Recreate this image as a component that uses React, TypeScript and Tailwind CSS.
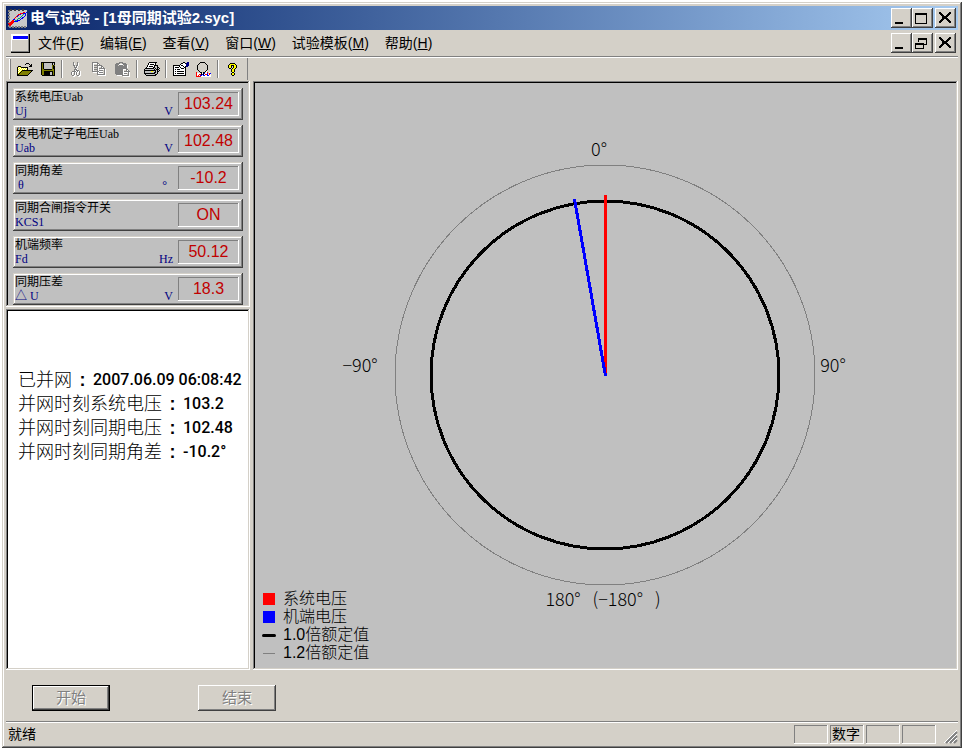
import { ReactNode } from "react"

const raised =
  "shadow-[inset_-1px_-1px_#404040,inset_1px_1px_#fff,inset_-2px_-2px_#808080,inset_2px_2px_#d4d0c8]"
const sunken =
  "shadow-[inset_-1px_-1px_#fff,inset_1px_1px_#808080,inset_-2px_-2px_#d4d0c8,inset_2px_2px_#000]"
const thinSunken = "shadow-[inset_-1px_-1px_#fff,inset_1px_1px_#808080]"
const card =
  "shadow-[inset_-1px_-1px_#404040,inset_1px_1px_#d4d0c8,inset_-2px_-2px_#808080,inset_2px_2px_#fff]"

const colors: Record<string, string> = {
  k: "#000000",
  w: "#ffffff",
  y: "#ffff00",
  o: "#808000",
  g: "#808080",
  s: "#c0c0c0",
  b: "#0000ff",
  n: "#000080",
  r: "#ff0000",
}

// each character is one pixel of the icon
function PixelIcon({ rows }: { rows: string[] }) {
  const width = Math.max(...rows.map((r) => r.length))
  return (
    <svg width={width} height={rows.length} shapeRendering="crispEdges" aria-hidden="true">
      {rows.map((row, y) =>
        [...row].map((c, x) =>
          colors[c] ? <rect key={x + "-" + y} x={x} y={y} width="1" height="1" fill={colors[c]} /> : null
        )
      )}
    </svg>
  )
}

const openIcon = [
  ".........kkk....",
  "........k...k.k.",
  ".............kk.",
  ".kkk........kkk.",
  "kywykkkkkkk.....",
  "kwywywywywk.....",
  "kywywywywyk.....",
  "kwywykkkkkkkkkkk",
  "kywykoooooooook.",
  "kwykoooooooook..",
  "kykoooooooook...",
  "kkoooooooook....",
  "kkkkkkkkkkk.....",
]

const saveIcon = [
  "kkkkkkkkkkkkkk",
  "kokssssssssksk",
  "kokssssssssk.k",
  "kokssssssssoko",
  "kokssssssssokk",
  "kokssssssssokk",
  "kokssssssssokk",
  "kookkkkkkkkook",
  "kooooooooooook",
  "kookkkkkkkkkok",
  "kookkkkkksskok",
  "kookkkkkksskok",
  "kookkkkkksskok",
  ".kkkkkkkkkkkkk",
]

const cutIcon = [
  "..g...g.....",
  "..gw..gw....",
  "..gw..gw....",
  "..gg.ggw....",
  "...gwgw.....",
  "...gggw.....",
  "....gw......",
  "...gggw.....",
  "...gwggg....",
  ".ggggwgwgw..",
  "gwwgwgwwgw..",
  "gw.gwgw.gw..",
  "gw.gwgw.gw..",
  ".ggww.ggww..",
  "..ww...ww...",
]

const copyIcon = [
  "gggggg..........",
  "gwwwwgg.........",
  "gw...gwg........",
  "gwgggggggg......",
  "gw...gwwwgg.....",
  "gwggggw..gwg....",
  "gw...gwgggggg...",
  "gwggggw.wwwwgw..",
  "gw...gwgggg.gw..",
  "gggggggwwww.gw..",
  ".wwwwgwgggg.gw..",
  ".....gwwwww.gw..",
  ".....ggggggggw..",
  "......wwwwwwww..",
]

const pasteIcon = [
  "....gggg........",
  ".gggg..gggg.....",
  "ggggwwwwgggg....",
  "ggg.gggg.gggw...",
  "ggggggggggggw...",
  "ggggggggggggw...",
  "gggggggggggg....",
  "ggggggggwwwgg...",
  "ggggggggw..gwg..",
  "ggggggggwgggggg.",
  "ggggggggwwwwwgw.",
  "ggggggggwggg.gw.",
  ".gggggggwwww.gw.",
  "..wwwwwgggggggw.",
  "........wwwwwww.",
]

const printIcon = [
  ".....kkkkkkkk...",
  "....kwwwwwwk....",
  "....kwkkkkwk....",
  "...kwwwwwwkkkk..",
  "...kwkkkkwk.sk..",
  "..kwwwwwwkksskk.",
  ".kkkkkkkkksksksk",
  "kssssssssskskkk.",
  "kkkkkkkkkkkksksk",
  "kssssssyysskskk.",
  "kssssssssskksk..",
  "kkkkkkkkkkkssk..",
  ".kssssssssskk...",
  "..kkkkkkkkkk....",
]

const propertiesIcon = [
  "..........kk..nn",
  "........kkwwknnn",
  ".......kwwwwwnnn",
  "kkkkkkkwkkwwwnnn",
  "kwwwwwkwwwkwknn.",
  "kwkkkkwkwwwkk...",
  "kwwwwwwwkkkwk...",
  "kwkwkkkwwwwwk...",
  "kwwwwwwwwwwwk...",
  "kwkwkkkkkkkwk...",
  "kwwwwwwwwwwwk...",
  "kwkwkkkkkkkwk...",
  "kwwwwwwwwwwwk...",
  "kkkkkkkkkkkkk...",
]

const zoomIcon = [
  "....kkkkk......",
  "...k.....k.....",
  "..k.......k....",
  ".k.........k...",
  ".k.........k...",
  ".k.........k...",
  ".k.........k...",
  ".k.........k...",
  "..k.......k....",
  "...k.....kw....",
  "r...kk.kk.wr.w.",
  "rwwwwkwkbwwb.rb",
  "rwwrrkbkwrrbwrw",
  "rwrwbbwbbwwbbww",
  "rrrrrwwwwwwwwww",
]

const helpIcon = [
  "..kkkkk...",
  ".kyyyyyk..",
  "kyykkkyyk.",
  "kyyk.kyyk.",
  "kyyk.kyyk.",
  ".kk.kyyk..",
  "...kyyk...",
  "...kyyk...",
  "...kyyk...",
  "....kk....",
  "...kyyk...",
  "...kyyk...",
  "....kk....",
]

function AppIcon() {
  return (
    <svg width="20" height="20" viewBox="0 0 20 20" shapeRendering="crispEdges" aria-hidden="true">
      <rect x="1" y="2" width="18" height="17" fill="#c8c8c8" />
      <path d="M1 19h18M1 2v17" stroke="#808080" strokeWidth="2" strokeDasharray="2 1" />
      <path d="M2 2h2M6 2h2M10 2h2M14 2h2" stroke="#404040" strokeWidth="2" />
      <path d="M5 13 8 9 13 6 18 5 17 8 12 12 7 14Z" stroke="#0000ff" strokeWidth="1" fill="none" />
      <path d="M6 11 10 7 17 4" stroke="#ff0000" strokeWidth="1" fill="none" />
      <path d="M7 13 12 10 16 6" stroke="#00a080" strokeWidth="1" fill="none" />
      <path d="M1 17 6 13" stroke="#ff0000" strokeWidth="3" fill="none" />
    </svg>
  )
}

function DocIcon() {
  return (
    <svg width="19" height="19" viewBox="0 0 19 19" shapeRendering="crispEdges" aria-hidden="true">
      <rect width="19" height="19" fill="#000" />
      <rect width="18" height="18" fill="#808080" />
      <rect width="17" height="17" fill="#fff" />
      <rect x="1" y="6" width="16" height="11" fill="#d4d0c8" />
      <rect x="2" y="2" width="15" height="3" fill="#0000ff" />
    </svg>
  )
}

function WindowButton({ label, d, thin }: { label: string; d: string; thin?: string }) {
  return (
    <button aria-label={label} className={"h-5 w-[21px] bg-[#d4d0c8] " + raised}>
      <svg width="21" height="20" shapeRendering="crispEdges" fill="none" stroke="#000" aria-hidden="true">
        <path d={d} strokeWidth="2" />
        {thin && <path d={thin} />}
      </svg>
    </button>
  )
}

function WindowButtons({ restore }: { restore?: boolean }) {
  return (
    <div className="ml-auto flex">
      <WindowButton label="最小化" d="M4 15h8" />
      {restore ? (
        <WindowButton
          label="还原"
          d="M6 6h9M3 11h9"
          thin="M6.500 5v4M14.500 5v7M12 11.500h3M3.500 10v6M11.500 10v6M3 15.500h9"
        />
      ) : (
        <WindowButton label="最大化" d="M3 6h12" thin="M3.500 5v11M14.500 5v11M3 15.500h12" />
      )}
      <div className="ml-[2px] flex">
        <WindowButton
          label="关闭"
          d="M4 5h2M5 6h2M6 7h2M7 8h2M8 9h3M7 10h5M7 11h2M11 11h2M6 12h2M12 12h2M5 13h2M13 13h2M4 14h2M14 14h2M10 9h2M11 8h2M12 7h2M13 6h2M14 5h2"
        />
      </div>
    </div>
  )
}

const menus = [
  ["文件", "F"],
  ["编辑", "E"],
  ["查看", "V"],
  ["窗口", "W"],
  ["试验模板", "M"],
  ["帮助", "H"],
]

const readings = [
  { name: "系统电压", suffix: "Uab", code: "Uj", unit: "V", value: "103.24" },
  { name: "发电机定子电压", suffix: "Uab", code: "Uab", unit: "V", value: "102.48" },
  { name: "同期角差", suffix: "", code: "\u00a0θ", unit: "°\u00a0\u00a0", value: "-10.2" },
  { name: "同期合闸指令开关", suffix: "", code: "KCS1", unit: "", value: "ON" },
  { name: "机端频率", suffix: "", code: "Fd", unit: "Hz", value: "50.12" },
  { name: "同期压差", suffix: "", code: "△\u00a0U", unit: "V", value: "18.3" },
]

const results = [
  ["已并网", "2007.06.09 06:08:42"],
  ["并网时刻系统电压", "103.2"],
  ["并网时刻同期电压", "102.48"],
  ["并网时刻同期角差", "-10.2°"],
]

function ToolButton({ label, rows, disabled }: { label: string; rows: string[]; disabled?: boolean }) {
  return (
    <button aria-label={label} disabled={disabled} className="flex h-[22px] w-[23px] items-center justify-center">
      <PixelIcon rows={rows} />
    </button>
  )
}

function Separator() {
  return <div className="mx-[2px] h-[18px] w-[2px] border-l border-r border-l-[#808080] border-r-white" />
}

function Dial() {
  return (
    <svg
      viewBox="0 0 701 585"
      className="col-start-1 row-start-1 h-0 min-h-full w-full font-['Noto_Sans_CJK_SC',sans-serif] text-lg font-light"
      fill="none"
      role="img"
      aria-label="同期角差"
    >
      <g shapeRendering="crispEdges">
        <circle cx="350" cy="292" r="210" stroke="#808080" />
        <circle cx="350" cy="292" r="174" stroke="#000" strokeWidth="3" />
        <path d="M350.500 112V292" stroke="#ff0000" strokeWidth="3" />
        <path d="M319.500 116 350.500 293" stroke="#0000ff" strokeWidth="3" />
      </g>
      <g fill="#000" textAnchor="middle">
        <text x="344" y="73">0°</text>
        <text x="105" y="289">−90°</text>
        <text x="578" y="289">90°</text>
        <text x="348" y="523">180°{"\u00a0\u00a0\u00a0"}(−180°{"\u00a0\u00a0\u00a0"})</text>
      </g>
    </svg>
  )
}

function LegendRow({ mark, children }: { mark: ReactNode; children: ReactNode }) {
  return (
    <li className="flex h-[18px] items-center gap-2">
      <span className="flex w-3 justify-center">{mark}</span>
      <span>{children}</span>
    </li>
  )
}

export default function App() {
  return (
    <div className="flex min-h-screen bg-white p-[2px] font-['Liberation_Sans','Noto_Sans_CJK_SC',sans-serif] text-sm text-black">
      <div className="flex flex-1 flex-col bg-[#d4d0c8] p-1 shadow-[inset_-1px_-1px_#404040,inset_1px_1px_#d4d0c8,inset_-2px_-2px_#808080,inset_2px_2px_#fff]">
        <header className="flex h-6 items-center gap-[2px] bg-linear-to-r from-[#0a246a] to-[#a6caf0] px-[2px]">
          <AppIcon />
          <h1 className="text-[15px] font-bold whitespace-nowrap text-white">电气试验 - [1母同期试验2.syc]</h1>
          <WindowButtons />
        </header>

        <nav className="flex h-[26px] items-center pr-[2px] pl-[5px]">
          <DocIcon />
          <div className="ml-2 flex gap-4">
            {menus.map(([name, key]) => (
              <button key={key} className="whitespace-nowrap">
                {name}(<u>{key}</u>)
              </button>
            ))}
          </div>
          <WindowButtons restore />
        </nav>

        <div className="flex h-[25px] items-center border-t border-[#808080] shadow-[inset_0_1px_#fff]">
          <div className="flex h-[22px] items-center border-r border-[#808080] pr-[3px] pl-[3px]">
            <div className="mr-[2px] h-5 w-[2px] border-l border-r border-l-white border-r-[#808080]" />
            <ToolButton label="打开" rows={openIcon} />
            <ToolButton label="保存" rows={saveIcon} />
            <Separator />
            <ToolButton label="剪切" rows={cutIcon} disabled />
            <ToolButton label="复制" rows={copyIcon} disabled />
            <ToolButton label="粘贴" rows={pasteIcon} disabled />
            <Separator />
            <ToolButton label="打印" rows={printIcon} />
            <Separator />
            <ToolButton label="属性" rows={propertiesIcon} />
            <ToolButton label="波形" rows={zoomIcon} />
            <Separator />
            <ToolButton label="帮助" rows={helpIcon} />
          </div>
        </div>

        <main className="flex flex-1 gap-[3px]">
          <aside className="flex w-[244px] shrink-0 flex-col gap-[2px]">
            <section className={"bg-[#c0c0c0] p-[2px] " + sunken}>
              <div className="flex flex-col gap-[5px] px-[5px] pt-[5px]">
                {readings.map((r) => (
                  <div key={r.name} className={"flex h-8 items-center bg-[#c0c0c0] p-[2px] pr-1 " + card}>
                    <div className="flex-1 text-xs/[14px]">
                      <p>
                        {r.name}
                        <span className="font-['Liberation_Serif',serif]">{r.suffix}</span>
                      </p>
                      <p className="flex min-h-[14px] justify-between pr-[5px] font-['Liberation_Serif','Noto_Sans_CJK_SC',serif] text-[#000080]">
                        <span>{r.code}</span>
                        <span>{r.unit}</span>
                      </p>
                    </div>
                    <output
                      className={"flex h-6 w-[61px] items-center justify-center text-base text-[#c00000] " + thinSunken}
                    >
                      {r.value}
                    </output>
                  </div>
                ))}
              </div>
            </section>

            <section className={"flex-1 bg-white px-3 pt-[59px] " + sunken}>
              {results.map(([name, value]) => (
                <p key={name} className="flex h-6 items-center whitespace-nowrap text-lg/6">
                  <span className="font-light">{name}</span>
                  <span className="w-[21px] shrink-0 text-center font-bold">:</span>
                  <span className="font-[Roboto,sans-serif] text-base/6 font-medium">{value}</span>
                </p>
              ))}
            </section>
          </aside>

          <section className={"grid flex-1 bg-[#c0c0c0] p-[2px] " + sunken}>
            <Dial />
            <ul className="col-start-1 row-start-1 self-end justify-self-start pb-[6px] pl-2 text-base/[18px] font-light">
              <LegendRow mark={<i className="size-3 bg-[#ff0000]" />}>系统电压</LegendRow>
              <LegendRow mark={<i className="size-3 bg-[#0000ff]" />}>机端电压</LegendRow>
              <LegendRow mark={<i className="h-[3px] w-[14px] shrink-0 rounded-full bg-black" />}>1.0倍额定值</LegendRow>
              <LegendRow mark={<i className="h-px w-3 bg-[#808080]" />}>1.2倍额定值</LegendRow>
            </ul>
          </section>
        </main>

        <div className="flex gap-[88px] px-[26px] pt-[15px] pb-[10px]">
          <button
            disabled
            className="h-[26px] w-[78px] border border-black text-[15px] text-[#808080] shadow-[inset_-1px_-1px_#404040,inset_1px_1px_#fff,inset_-2px_-2px_#808080] text-shadow-[1px_1px_0_#fff]"
          >
            开始
          </button>
          <button
            disabled
            className={"h-[26px] w-[78px] text-[15px] text-[#808080] text-shadow-[1px_1px_0_#fff] " + raised}
          >
            结束
          </button>
        </div>

        <footer className="flex h-[23px] items-end gap-[2px] border-t border-[#808080] pl-[2px] shadow-[inset_0_1px_#fff]">
          <span className="mr-auto leading-5">就绪</span>
          <span className={"h-[19px] w-[34px] " + thinSunken} />
          <span className={"h-[19px] w-[34px] pl-[2px] leading-[19px] " + thinSunken}>数字</span>
          <span className={"h-[19px] w-[34px] " + thinSunken} />
          <span className={"h-[19px] w-[34px] " + thinSunken} />
          <svg width="20" height="14" className="shrink-0" aria-hidden="true">
            <path d="M8 13 19 2M12 13 19 6M16 13 19 10" stroke="#808080" strokeWidth="2" />
            <path d="M6 13 19 0M10 13 19 4M14 13 19 8" stroke="#fff" />
          </svg>
        </footer>
      </div>
    </div>
  )
}
